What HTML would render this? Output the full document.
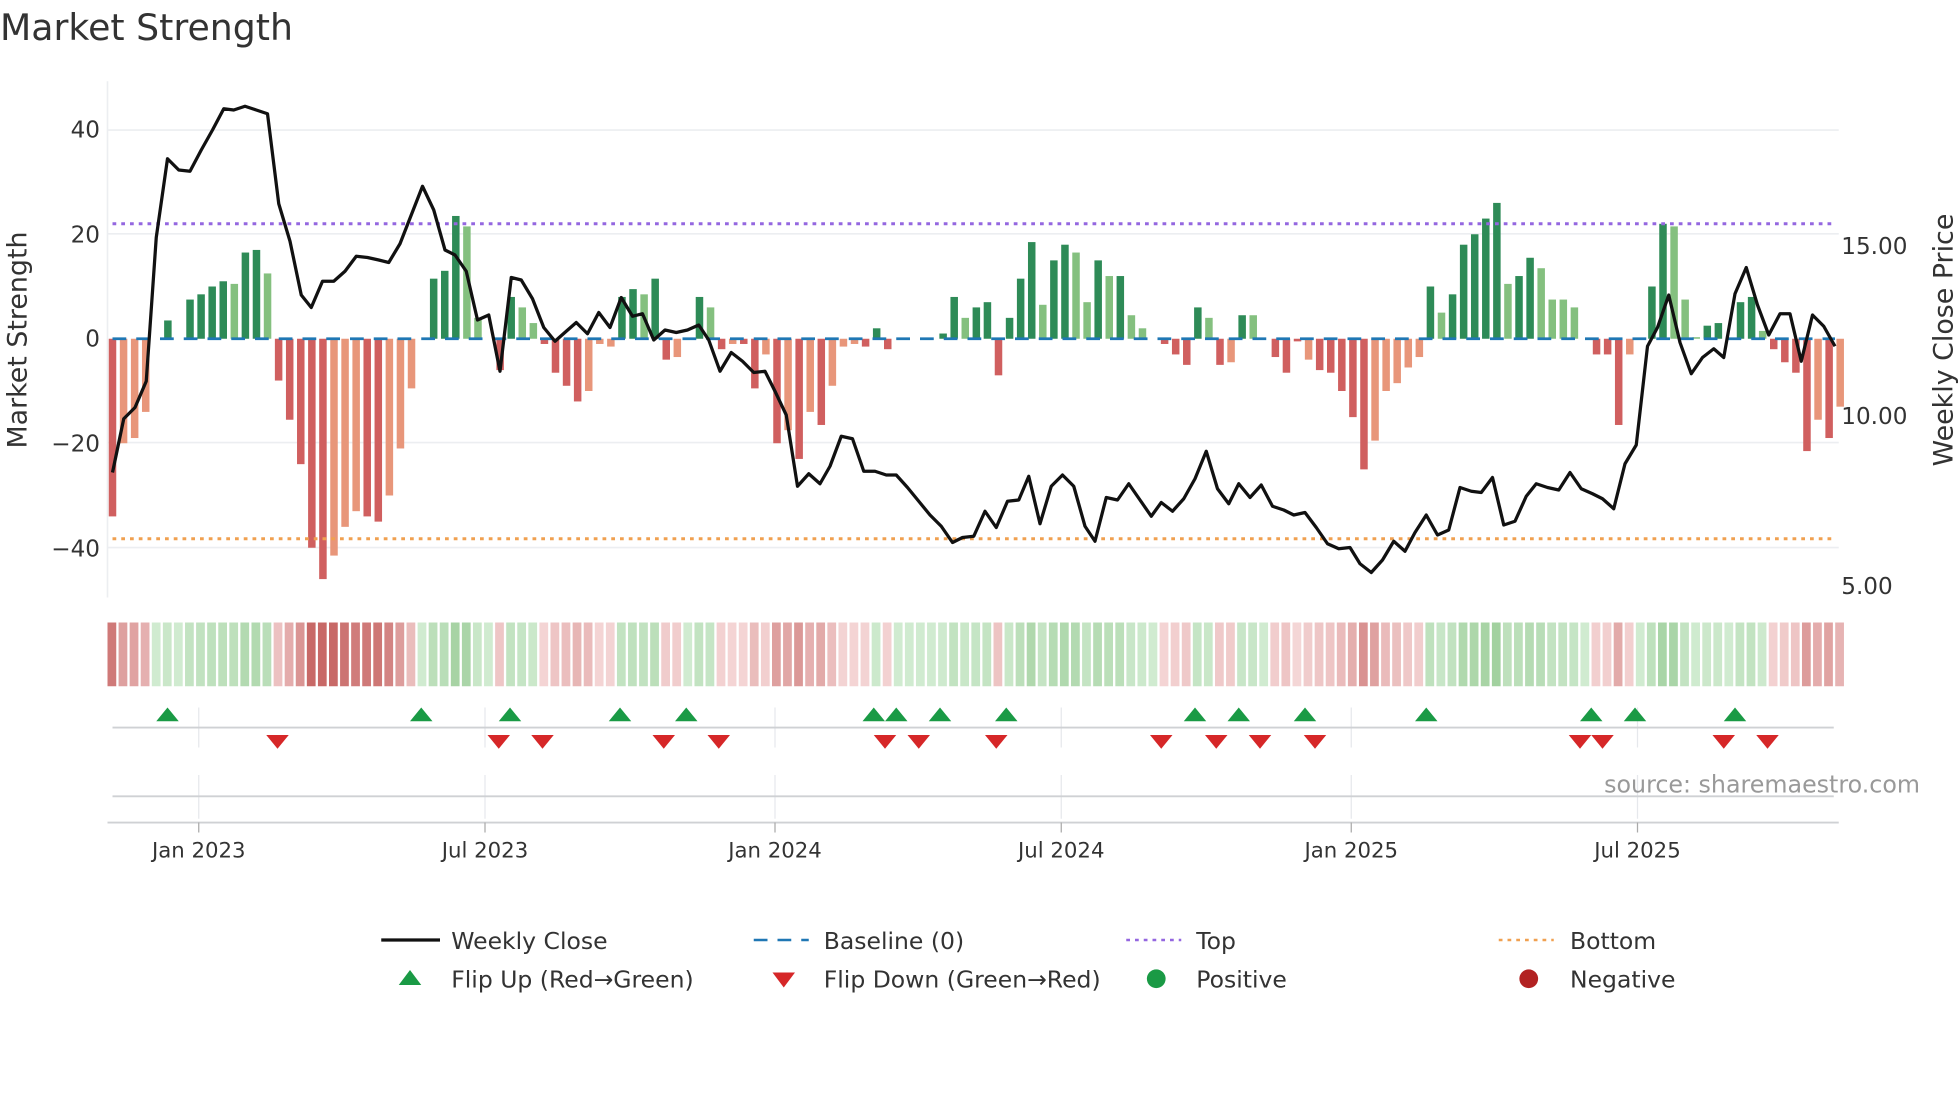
<!DOCTYPE html>
<html><head><meta charset="utf-8"><style>
html,body{margin:0;padding:0;background:#fff;width:1960px;height:1102px;overflow:hidden}
svg{display:block}
text{font-family:"DejaVu Sans","Liberation Sans",sans-serif;fill:#333}
</style></head><body>
<svg id="s" width="1960" height="1102" viewBox="0 0 1568 881.6" xmlns="http://www.w3.org/2000/svg">
<rect width="1568" height="882" fill="#fff"/>
<text x="0" y="32" font-size="29">Market Strength</text>
<g stroke="#eceef1" stroke-width="1.3">
<line x1="86" x2="1471" y1="104" y2="104"/><line x1="86" x2="1471" y1="187" y2="187"/>
<line x1="86" x2="1471" y1="354" y2="354"/><line x1="86" x2="1471" y1="438" y2="438"/>
</g>
<line x1="86" x2="86" y1="65" y2="478" stroke="#eceef1" stroke-width="1.3"/>
<g font-size="18.5" text-anchor="end">
<text x="80" y="110">40</text><text x="80" y="194">20</text><text x="80" y="277">0</text>
<text x="80" y="361">−20</text><text x="80" y="445">−40</text>
</g>
<g font-size="18.5">
<text x="1473" y="203">15.00</text><text x="1473" y="339">10.00</text><text x="1473" y="475">5.00</text>
</g>
<text transform="translate(21,272) rotate(-90)" font-size="21.5" text-anchor="middle">Market Strength</text>
<text transform="translate(1562,272) rotate(-90)" font-size="21.5" text-anchor="middle">Weekly Close Price</text>
<g id="bars"></g>
<line x1="90" x2="1468" y1="271" y2="271" stroke="#1f77b4" stroke-width="2.2" stroke-dasharray="11,8"/>
<line x1="90" x2="1468" y1="179" y2="179" stroke="#9467e0" stroke-width="2.4" stroke-dasharray="3,4"/>
<line x1="90" x2="1468" y1="431" y2="431" stroke="#f0a050" stroke-width="2.4" stroke-dasharray="3,4"/>
<polyline id="price" fill="none" stroke="#111" stroke-width="2.6" stroke-linejoin="round"/>
<g id="heat"></g>
<g stroke="#e6e8ec" stroke-width="1">
<line x1="159" x2="159" y1="566" y2="598"/><line x1="388" x2="388" y1="566" y2="598"/><line x1="620" x2="620" y1="566" y2="598"/><line x1="849" x2="849" y1="566" y2="598"/><line x1="1081" x2="1081" y1="566" y2="598"/><line x1="1310" x2="1310" y1="566" y2="598"/>
<line x1="159" x2="159" y1="620" y2="655"/><line x1="388" x2="388" y1="620" y2="655"/><line x1="620" x2="620" y1="620" y2="655"/><line x1="849" x2="849" y1="620" y2="655"/><line x1="1081" x2="1081" y1="620" y2="655"/><line x1="1310" x2="1310" y1="620" y2="655"/>
</g>
<line x1="90" x2="1467" y1="582" y2="582" stroke="#cfd1d4" stroke-width="1.5"/>
<line x1="90" x2="1467" y1="637" y2="637" stroke="#cfd1d4" stroke-width="1.5"/>
<line x1="86" x2="1471" y1="658" y2="658" stroke="#cfd1d4" stroke-width="1.5"/>
<g id="flips"></g>
<g stroke="#aaa" stroke-width="1"><line x1="159" x2="159" y1="658" y2="666"/><line x1="388" x2="388" y1="658" y2="666"/><line x1="620" x2="620" y1="658" y2="666"/><line x1="849" x2="849" y1="658" y2="666"/><line x1="1081" x2="1081" y1="658" y2="666"/><line x1="1310" x2="1310" y1="658" y2="666"/></g>
<g font-size="17" text-anchor="middle">
<text x="159" y="686">Jan 2023</text><text x="388" y="686">Jul 2023</text><text x="620" y="686">Jan 2024</text><text x="849" y="686">Jul 2024</text><text x="1081" y="686">Jan 2025</text><text x="1310" y="686">Jul 2025</text>
</g>
<text x="1536" y="634" font-size="19" text-anchor="end" style="fill:#999">source: sharemaestro.com</text>
<g font-size="18.8">
<line x1="305" x2="352" y1="752" y2="752" stroke="#111" stroke-width="2.6"/><text x="361" y="759">Weekly Close</text>
<line x1="603" x2="647" y1="752" y2="752" stroke="#1f77b4" stroke-width="2" stroke-dasharray="11,8"/><text x="659" y="759">Baseline (0)</text>
<line x1="901" x2="945" y1="752" y2="752" stroke="#9467e0" stroke-width="2" stroke-dasharray="3,4"/><text x="957" y="759">Top</text>
<line x1="1199" x2="1243" y1="752" y2="752" stroke="#f0a050" stroke-width="2" stroke-dasharray="3,4"/><text x="1256" y="759">Bottom</text>
<polygon points="319,788 328,776 337,788" fill="#1a9a45"/><text x="361" y="790">Flip Up (Red→Green)</text>
<polygon points="618,778 636,778 627,790" fill="#d62728"/><text x="659" y="790">Flip Down (Green→Red)</text>
<circle cx="925" cy="783" r="7.5" fill="#1a9a45"/><text x="957" y="790">Positive</text>
<circle cx="1223" cy="783" r="7.5" fill="#b22222"/><text x="1256" y="790">Negative</text>
</g>
</svg>
<script>
var v=[-34,-20,-19,-14,0,3.5,0,7.5,8.5,10,11,10.5,16.5,17,12.5,-8,-15.5,-24,-40,-46,-41.5,-36,-33,-34,-35,-30,-21,-9.5,0,11.5,13,23.5,21.5,4,0,-6,8,6,3,-1,-6.5,-9,-12,-10,-1,-1.5,8,9.5,8.5,11.5,-4,-3.5,0,8,6,-2,-1,-1,-9.5,-3,-20,-17.5,-23,-14,-16.5,-9,-1.5,-1,-1.5,2,-2,0,0,0,0,1,8,4,6,7,-7,4,11.5,18.5,6.5,15,18,16.5,7,15,12,12,4.5,2,0,-1,-3,-5,6,4,-5,-4.5,4.5,4.5,0,-3.5,-6.5,-0.5,-4,-6,-6.5,-10,-15,-25,-19.5,-10,-8.5,-5.5,-3.5,10,5,8.5,18,20,23,26,10.5,12,15.5,13.5,7.5,7.5,6,0,-3,-3,-16.5,-3,0,10,22,21.5,7.5,0.3,2.5,3,0,7,8,1.5,-2,-4.5,-6.5,-21.5,-15.5,-19,-13];
var L={11:1,14:1,32:1,33:1,37:1,38:1,48:1,54:1,77:1,84:1,87:1,88:1,90:1,92:1,93:1,99:1,103:1,120:1,126:1,129:1,130:1,131:1,132:1,141:1,142:1,143:1,149:1};
var O={1:1,2:1,3:1,20:1,21:1,22:1,25:1,26:1,27:1,43:1,44:1,45:1,51:1,56:1,59:1,61:1,63:1,65:1,66:1,67:1,101:1,108:1,114:1,115:1,116:1,117:1,118:1,137:1,154:1,156:1};
var ns="http://www.w3.org/2000/svg",b=document.getElementById("bars"),h=document.getElementById("heat");
function R(p,x,y,w,hh,f){var r=document.createElementNS(ns,"rect");r.setAttribute("x",x);r.setAttribute("y",y);r.setAttribute("width",w);r.setAttribute("height",hh);r.setAttribute("fill",f);p.appendChild(r);}
var k=4.18;
for(var i=0;i<v.length;i++){var x=90+8.86*i,val=v[i];
 if(Math.abs(val)>0.2){var c;if(val>0)c=L[i]?"#84c07f":"#2e8b57";else c=O[i]?"#e8967a":"#d05f5f";
  var hh=Math.abs(val)*k;R(b,x-3,val>0?271-hh:271,6,hh,c);}
 var a=Math.min(1,Math.abs(val)/40);var col;
 if(val>=0){var g=[208-Math.round(a*70),235-Math.round(a*40),208-Math.round(a*75)];col="rgb("+g+")";}
 else{var r=[245-Math.round(a*45),215-Math.round(a*110),215-Math.round(a*112)];col="rgb("+r+")";}
 R(h,x-4,498,7,51,col);}
var P=[[90,378],[99,335],[108,326],[117,305],[125,190],[134,127],[143,136],[152,137],[161,120],[170,104],[179,87],[187,88],[196,85],[205,88],[214,91],[223,163],[232,193],[241,236],[249,246],[258,225],[267,225],[276,217],[285,205],[294,206],[303,208],[311,210],[320,195],[329,172],[338,149],[347,168],[356,200],[364,204],[373,217],[382,256],[391,252],[400,297],[409,222],[417,224],[426,239],[435,262],[444,273],[453,265],[461,258],[470,267],[479,250],[488,262],[497,238],[506,253],[514,251],[523,272],[532,264],[541,266],[550,264],[559,260],[567,272],[576,297],[585,282],[594,289],[603,298],[612,297],[620,313],[629,332],[638,389],[647,379],[656,387],[664,373],[673,349],[682,351],[691,377],[700,377],[709,380],[717,380],[726,390],[735,401],[744,412],[753,421],[762,434],[770,430],[779,429],[788,409],[797,422],[806,401],[815,400],[823,381],[832,419],[841,389],[850,380],[859,389],[868,421],[876,433],[885,398],[894,400],[903,387],[912,400],[921,413],[929,402],[938,409],[947,399],[956,383],[965,361],[974,391],[983,403],[991,387],[1000,398],[1009,388],[1018,405],[1027,408],[1035,412],[1044,410],[1053,422],[1062,435],[1071,439],[1080,438],[1088,451],[1097,458],[1106,448],[1115,433],[1124,441],[1132,426],[1141,412],[1150,428],[1159,424],[1168,390],[1177,393],[1185,394],[1194,382],[1203,420],[1212,417],[1221,397],[1229,387],[1238,390],[1247,392],[1256,378],[1265,391],[1274,395],[1282,399],[1291,407],[1300,371],[1309,356],[1318,277],[1326,262],[1335,236],[1344,274],[1353,299],[1362,286],[1371,279],[1379,286],[1388,235],[1397,214],[1406,244],[1415,268],[1424,251],[1432,251],[1441,289],[1450,252],[1459,261],[1468,277]];
document.getElementById("price").setAttribute("points",P.map(function(p){return p.join(",")}).join(" "));
var f=document.getElementById("flips");
[134,337,408,496,549,699,717,752,805,956,991,1044,1141,1273,1308,1388].forEach(function(x){var p=document.createElementNS(ns,"polygon");p.setAttribute("points",(x-9)+",577 "+x+",566 "+(x+9)+",577");p.setAttribute("fill","#1a9a45");f.appendChild(p);});
[222,399,434,531,575,708,735,797,929,973,1008,1052,1264,1282,1379,1414].forEach(function(x){var p=document.createElementNS(ns,"polygon");p.setAttribute("points",(x-9)+",588 "+(x+9)+",588 "+x+",599");p.setAttribute("fill","#d62728");f.appendChild(p);});
</script>
</body></html>
